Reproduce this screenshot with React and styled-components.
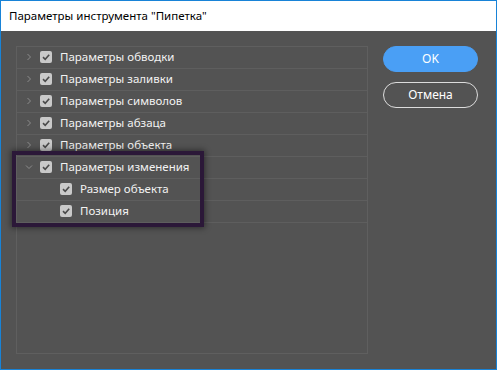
import styled, { createGlobalStyle } from "styled-components";

const GlobalStyle = createGlobalStyle`
  html, body {
    margin: 0;
    padding: 0;
    background: #fff;
  }
  * {
    box-sizing: border-box;
  }
`;

const Window = styled.div`
  width: 497px;
  height: 370px;
  border: 1px solid #1883d7;
  display: flex;
  flex-direction: column;
  font-family: "Noto Sans", "Open Sans", sans-serif;
`;

const TitleBar = styled.div`
  height: 30px;
  background: #fff;
  color: #000;
  font-size: 11.5px;
  display: flex;
  align-items: center;
  padding: 0 0 1px 8px;
`;

const Body = styled.div`
  position: relative;
  flex: 1;
  background: #535353;
  display: flex;
  gap: 15px;
  padding: 15px 0 0 15px;
`;

const Panel = styled.div`
  width: 352px;
  height: 308px;
  border: 1px solid #5f5f5f;
  display: flex;
  flex-direction: column;
`;

const Row = styled.div`
  height: 22px;
  border-bottom: 1px solid #5e5e5e;
  display: flex;
  align-items: center;
  padding-left: ${(p) => (p.$child ? 43 : 5)}px;
  padding-bottom: 2px;
  color: #f2f2f2;
  font-size: 11.5px;
  flex-shrink: 0;
`;

const Toggle = styled.span`
  width: 14px;
  height: 14px;
  margin-right: 4px;
  display: flex;
  align-items: center;
  justify-content: center;
`;

const Check = styled.span`
  width: 12px;
  height: 12px;
  border-radius: 2px;
  background: #c9c9c9;
  margin-right: 8px;
  display: flex;
  align-items: center;
  justify-content: center;
`;

const Buttons = styled.div`
  display: flex;
  flex-direction: column;
  gap: 10px;
`;

const Button = styled.button`
  width: 95px;
  height: 26px;
  border-radius: 13px;
  font-family: inherit;
  font-size: 12px;
  padding: 0 0 1px;
  color: #fff;
  background: ${(p) => (p.$primary ? "#4a9ff5" : "transparent")};
  border: 1px solid ${(p) => (p.$primary ? "#4a9ff5" : "#dcdcdc")};
`;

const Highlight = styled.div`
  position: absolute;
  left: 11px;
  top: 120px;
  width: 192px;
  height: 76px;
  border: 4px solid #2b1838;
  box-shadow: 0 0 6px 1px rgba(0, 0, 0, 0.45);
  pointer-events: none;
`;

const Chevron = ({ open }) => (
  <svg width="8" height="8" viewBox="0 0 8 8">
    {open ? (
      <path d="M1 2.5 L4 5.5 L7 2.5" fill="none" stroke="#8c8c8c" strokeWidth="1" />
    ) : (
      <path d="M2.5 1 L5.5 4 L2.5 7" fill="none" stroke="#8c8c8c" strokeWidth="1" />
    )}
  </svg>
);

const Tick = () => (
  <svg width="10" height="10" viewBox="0 0 10 10">
    <path d="M2 5.2 L4.2 7.3 L8.2 2.8" fill="none" stroke="#4a4a4a" strokeWidth="1.6" />
  </svg>
);

const items = [
  { label: "Параметры обводки" },
  { label: "Параметры заливки" },
  { label: "Параметры символов" },
  { label: "Параметры абзаца" },
  { label: "Параметры объекта" },
  { label: "Параметры изменения", open: true },
  { label: "Размер объекта", child: true },
  { label: "Позиция", child: true },
];

export default function App() {
  return (
    <>
      <GlobalStyle />
      <Window>
        <TitleBar>Параметры инструмента "Пипетка"</TitleBar>
        <Body>
          <Panel>
            {items.map((it) => (
              <Row key={it.label} $child={it.child}>
                {!it.child && (
                  <Toggle>
                    <Chevron open={it.open} />
                  </Toggle>
                )}
                <Check>
                  <Tick />
                </Check>
                {it.label}
              </Row>
            ))}
          </Panel>
          <Buttons>
            <Button $primary>OK</Button>
            <Button>Отмена</Button>
          </Buttons>
          <Highlight />
        </Body>
      </Window>
    </>
  );
}
